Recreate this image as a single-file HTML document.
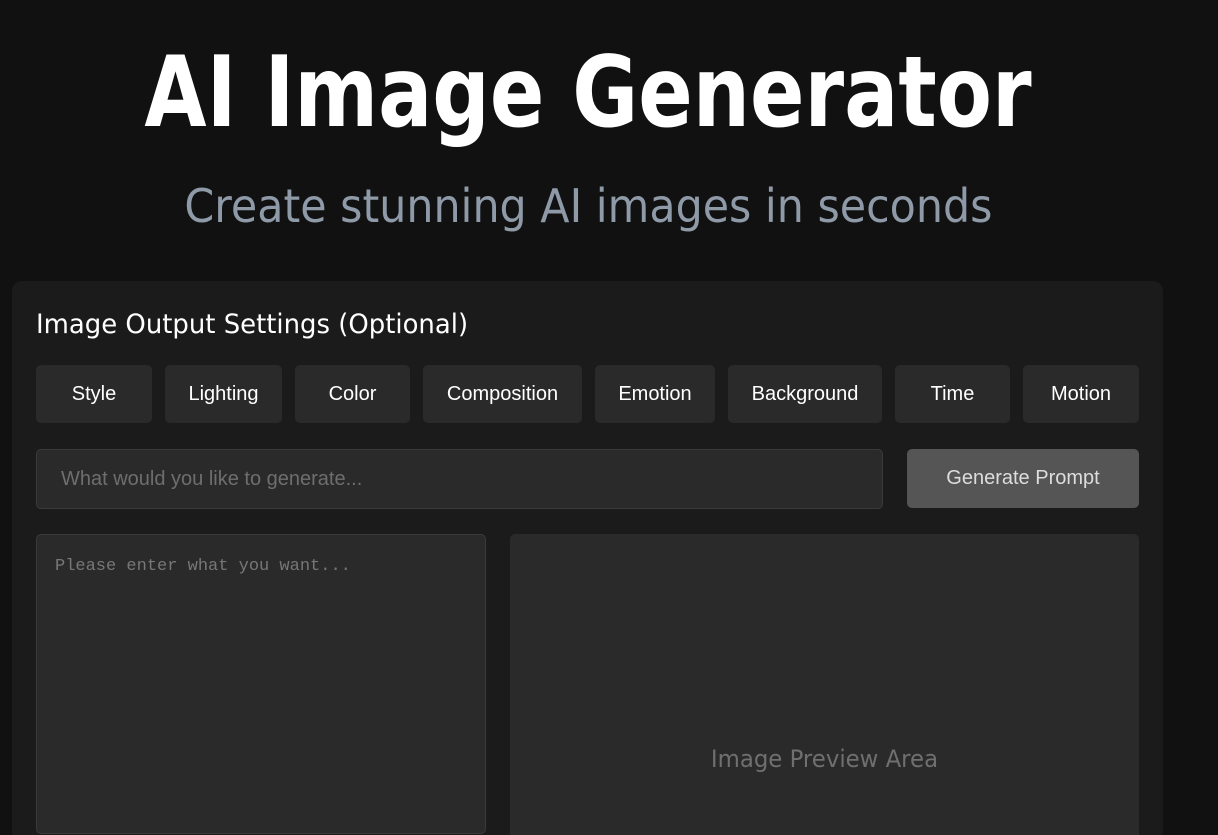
<!DOCTYPE html>
<html><head><style>
html,body{margin:0;height:835px;overflow:hidden}
body{background:#111;width:1218px;font-family:"Liberation Sans",sans-serif;position:relative}
.t{position:absolute;left:0;width:1176px;text-align:center;top:38px;color:#fff;font:bold 98px/110px "DejaVu Sans","Liberation Sans",sans-serif;}
.t span{display:inline-block;transform:scaleX(0.82);transform-origin:center}
.s{position:absolute;left:0;width:1176px;text-align:center;top:176px;color:#8f9aa8;font:46px/60px "DejaVu Sans",sans-serif}
.s span{display:inline-block;transform:scaleX(0.93)}
.card{position:absolute;left:12px;top:281px;width:1151px;height:560px;background:#1b1b1b;border-radius:10px}
.h{position:absolute;left:36px;top:307px;color:#fff;font:27px/36px "DejaVu Sans",sans-serif}
.h span{display:inline-block;transform:scaleX(0.96);transform-origin:left}
.b{position:absolute;top:365px;height:58px;background:#2a2a2a;border-radius:5px;color:#fff;font-size:20px;line-height:58px;text-align:center}
.in{position:absolute;left:36px;top:449px;width:847px;height:60px;background:#2a2a2a;border:1px solid #3a3a3a;border-radius:5px;box-sizing:border-box;color:#6e6e6e;font-size:20px;line-height:58px;padding-left:24px}
.g{position:absolute;left:907px;top:449px;width:232px;height:59px;background:#555;border-radius:5px;color:#ddd;font-size:20px;line-height:59px;text-align:center}
.ta{position:absolute;left:36px;top:534px;width:450px;height:300px;background:#2a2a2a;border:1px solid #3a3a3a;border-radius:5px;box-sizing:border-box;color:#777;font:17px "Liberation Mono",monospace;padding:22px 18px}
.pv{position:absolute;left:510px;top:534px;width:629px;height:310px;background:#2a2a2a;border-radius:5px;color:#6f6f6f;font:24px "DejaVu Sans",sans-serif;text-align:center}
.pv span{position:absolute;left:0;right:0;top:211px;transform:scaleX(0.95)}
</style></head><body>
<div class="t"><span>AI Image Generator</span></div>
<div class="s"><span>Create stunning AI images in seconds</span></div>
<div class="card"></div>
<div class="h"><span>Image Output Settings (Optional)</span></div>
<div class="b" style="left:36px;width:116px">Style</div>
<div class="b" style="left:165px;width:117px">Lighting</div>
<div class="b" style="left:295px;width:115px">Color</div>
<div class="b" style="left:423px;width:159px">Composition</div>
<div class="b" style="left:595px;width:120px">Emotion</div>
<div class="b" style="left:728px;width:154px">Background</div>
<div class="b" style="left:895px;width:115px">Time</div>
<div class="b" style="left:1023px;width:116px">Motion</div>
<div class="in">What would you like to generate...</div>
<div class="g">Generate Prompt</div>
<div class="ta">Please enter what you want...</div>
<div class="pv"><span>Image Preview Area</span></div>
</body></html>
